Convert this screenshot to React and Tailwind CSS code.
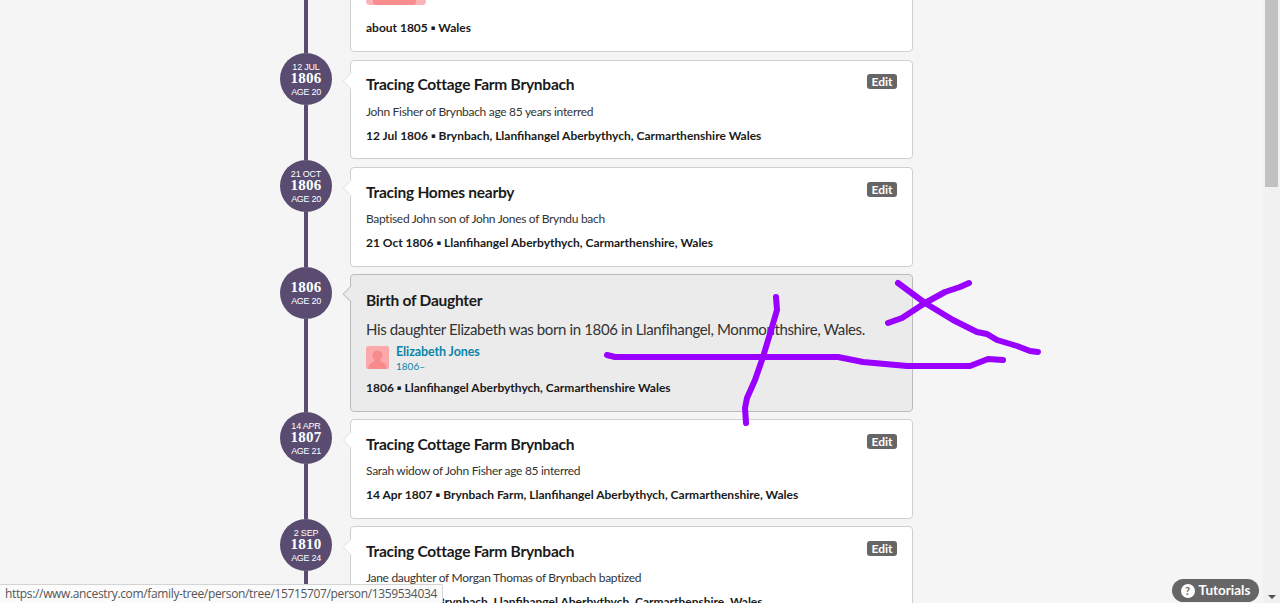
import React from "react";

const sans = "font-['Lato','Noto_Sans',sans-serif]";

function Marker({ top, year, age }) {
  return (
    <div className="flex w-[52px] shrink-0 flex-col items-center">
      <div className="flex h-[52px] w-[52px] shrink-0 flex-col items-center justify-center rounded-full bg-[#594c70] text-white">
        {top && <div className="font-['Liberation_Sans',sans-serif] text-[9px] leading-[10px] tracking-[-0.2px]">{top}</div>}
        <div className="-mt-[1px] font-['Liberation_Serif',serif] text-[15px] font-bold leading-[14px] tracking-[0.2px]">{year}</div>
        <div className="mt-[2px] font-['Liberation_Sans',sans-serif] text-[9px] leading-[10px] tracking-[-0.3px]">{age}</div>
      </div>
      <div className="w-[4px] flex-1 bg-[#594c70]" />
    </div>
  );
}

function Pointer({ grey }) {
  return (
    <div
      className={
        grey
          ? "absolute left-[-6px] top-[13px] h-[12px] w-[12px] rotate-45 border-b border-l border-[#c4c4c4] bg-[#ebebeb]"
          : "absolute left-[-6px] top-[14px] h-[12px] w-[12px] rotate-45 border-b border-l border-[#e6e6e6] bg-white"
      }
    />
  );
}

function Dot() {
  return <span className="align-[2px] font-['DejaVu_Sans',sans-serif] text-[7px] leading-none">▪</span>;
}

function Card({ title, desc, date, place, height, pad, gap }) {
  return (
    <div className={`relative ml-[18px] mt-[7px] w-[563px] rounded-[4px] border border-[#cfcfcf] bg-white px-[15px] ${pad} ${height}`}>
      <Pointer />
      <div className="flex items-start justify-between">
        <h3 className="text-[15.5px] font-bold leading-[20px] tracking-[-0.25px] text-[#1a1a1a]">{title}</h3>
        <span className="flex h-[15px] w-[30px] items-center justify-center rounded-[3px] bg-[#666666] text-[12px] font-bold leading-none text-white">Edit</span>
      </div>
      <p className={`${gap} whitespace-nowrap text-[12px] leading-[18px] tracking-[-0.3px] text-[#333333]`}>{desc}</p>
      <p className="mt-[6px] h-[18px] whitespace-nowrap text-[12px] font-bold leading-[18px] text-[#1a1a1a]">
        {date} <Dot /> {place}
      </p>
    </div>
  );
}

function Silhouette() {
  return (
    <svg viewBox="0 0 23 23" className="h-full w-full">
      <rect width="23" height="23" rx="2" fill="#fca9ab" />
      <circle cx="11.5" cy="9.5" r="5" fill="#f78a8a" />
      <path d="M2.5 23c0-4 1.5-6 5-7l1.500-2h5l1.500 2c3.500 1 5 3 5 7z" fill="#f78a8a" />
    </svg>
  );
}

const strokes = [
  "M776 297 L777 310 L772 327 L763 357 L755 380 L747 398 L745 408 L746 423",
  "M607 355 L615 357 L763 357 L838 357 L863 362 L907 366 L970 366 L988 359 L1003 360",
  "M898 283 L925 303 L953 320 L977 332 L987 334 L997 340 L1017 346 L1030 351 L1038 352",
  "M888 323 L902 318 L925 303 L945 292 L960 287 L969 283",
];

export default function App() {
  return (
    <div className={`relative flex h-[603px] w-[1280px] overflow-hidden bg-[#f5f5f5] ${sans}`}>
      <main className="min-w-0 flex-1 pl-[280px]">
        <div className="mt-[-27px] flex h-[80px]">
          <div className="flex w-[52px] shrink-0 justify-center">
            <div className="w-[4px] bg-[#594c70]" />
          </div>
          <div className="ml-[18px] h-[79px] w-[563px] rounded-[4px] border border-[#cfcfcf] bg-white pl-[15px] pt-[2px]">
            <div className="h-[29px] w-[60px] overflow-hidden rounded-[4px] bg-[#fcb3b5]">
              <div className="ml-[7px] h-full w-[43px] rounded-b-[3px] bg-[#f98d8d]" />
            </div>
            <p className="mt-[14px] h-[18px] text-[12px] font-bold leading-[18px] text-[#1a1a1a]">
              about 1805 <Dot /> Wales
            </p>
          </div>
        </div>

        <div className="flex h-[107px]">
          <Marker top="12 JUL" year="1806" age="AGE 20" />
          <Card height="h-[99px]" pad="pt-[13px]" gap="mt-[9px]" title="Tracing Cottage Farm Brynbach" desc="John Fisher of Brynbach age 85 years interred" date="12 Jul 1806" place="Brynbach, Llanfihangel Aberbythych, Carmarthenshire Wales" />
        </div>
        <div className="flex h-[107px]">
          <Marker top="21 OCT" year="1806" age="AGE 20" />
          <Card height="h-[100px]" pad="pt-[14px]" gap="mt-[8px]" title="Tracing Homes nearby" desc="Baptised John son of John Jones of Bryndu bach" date="21 Oct 1806" place="Llanfihangel Aberbythych, Carmarthenshire, Wales" />
        </div>
        <div className="flex h-[145px]">
          <Marker year="1806" age="AGE 20" />
          <div className="relative ml-[18px] mt-[7px] h-[138px] w-[563px] rounded-[4px] border border-[#bbbbbb] bg-[#ebebeb] pl-[15px] pt-[15px]">
            <Pointer grey />
            <h3 className="text-[15.5px] font-bold leading-[20px] tracking-[-0.25px] text-[#1a1a1a]">Birth of Daughter</h3>
            <p className="mt-[9px] whitespace-nowrap text-[15px] leading-[20px] tracking-[-0.37px] text-[#333333]">His daughter Elizabeth was born in 1806 in Llanfihangel, Monmouthshire, Wales.</p>
            <div className="mt-[7px] flex h-[23px]">
              <div className="h-[23px] w-[23px]"><Silhouette /></div>
              <div className="ml-[7px]">
                <div className="text-[12.5px] font-bold leading-[11px] tracking-[-0.1px] text-[#0c85a8]">Elizabeth Jones</div>
                <div className="mt-[3px] text-[10px] leading-[12px] text-[#0c85a8]">1806–</div>
              </div>
            </div>
            <p className="mt-[10px] h-[18px] text-[12px] font-bold leading-[18px] text-[#1a1a1a]">
              1806 <Dot /> Llanfihangel Aberbythych, Carmarthenshire Wales
            </p>
          </div>
        </div>
        <div className="flex h-[107px]">
          <Marker top="14 APR" year="1807" age="AGE 21" />
          <Card height="h-[100px]" pad="pt-[14px]" gap="mt-[8px]" title="Tracing Cottage Farm Brynbach" desc="Sarah widow of John Fisher age 85 interred" date="14 Apr 1807" place="Brynbach Farm, Llanfihangel Aberbythych, Carmarthenshire, Wales" />
        </div>
        <div className="flex h-[107px]">
          <Marker top="2 SEP" year="1810" age="AGE 24" />
          <Card height="h-[100px]" pad="pt-[14px]" gap="mt-[8px]" title="Tracing Cottage Farm Brynbach" desc="Jane daughter of Morgan Thomas of Brynbach baptized" date="2 Sep 1810" place="Brynbach, Llanfihangel Aberbythych, Carmarthenshire, Wales" />
        </div>
      </main>

      <aside className="flex w-[17px] shrink-0 flex-col bg-[#f1f1f1] px-[2px]">
        <div className="h-[187px] w-[13px] bg-[#c1c1c1]" />
        <div className="flex flex-1 items-end justify-center pb-[4px]">
          <div className="h-0 w-0 border-x-[4px] border-t-[4px] border-x-transparent border-t-[#505050]" />
        </div>
      </aside>

      <div className="absolute bottom-0 left-0 flex h-[19px] w-[443px] items-center whitespace-nowrap rounded-tr-[2px] border-r border-t border-[#d4d4d4] bg-[#fbfbfb] pl-[5px] font-['Open_Sans',sans-serif] text-[12px] leading-none tracking-[-0.35px] text-[#555555]">
        https://www.ancestry.com/family-tree/person/tree/15715707/person/1359534034
      </div>

      <div className="absolute bottom-[1px] left-[1172px] flex h-[23px] w-[87px] items-center justify-center gap-[4px] rounded-full bg-[#666666] text-[13.5px] font-bold text-white">
        <span className="flex h-[14px] w-[14px] items-center justify-center rounded-full bg-white text-[11px] leading-none text-[#666666]">?</span>
        Tutorials
      </div>

      <svg className="pointer-events-none absolute left-0 top-0" width="1280" height="603" fill="none" stroke="#9900ff" strokeWidth="6" strokeLinecap="round" strokeLinejoin="round">
        {strokes.map((d) => (
          <path key={d} d={d} />
        ))}
      </svg>
    </div>
  );
}
